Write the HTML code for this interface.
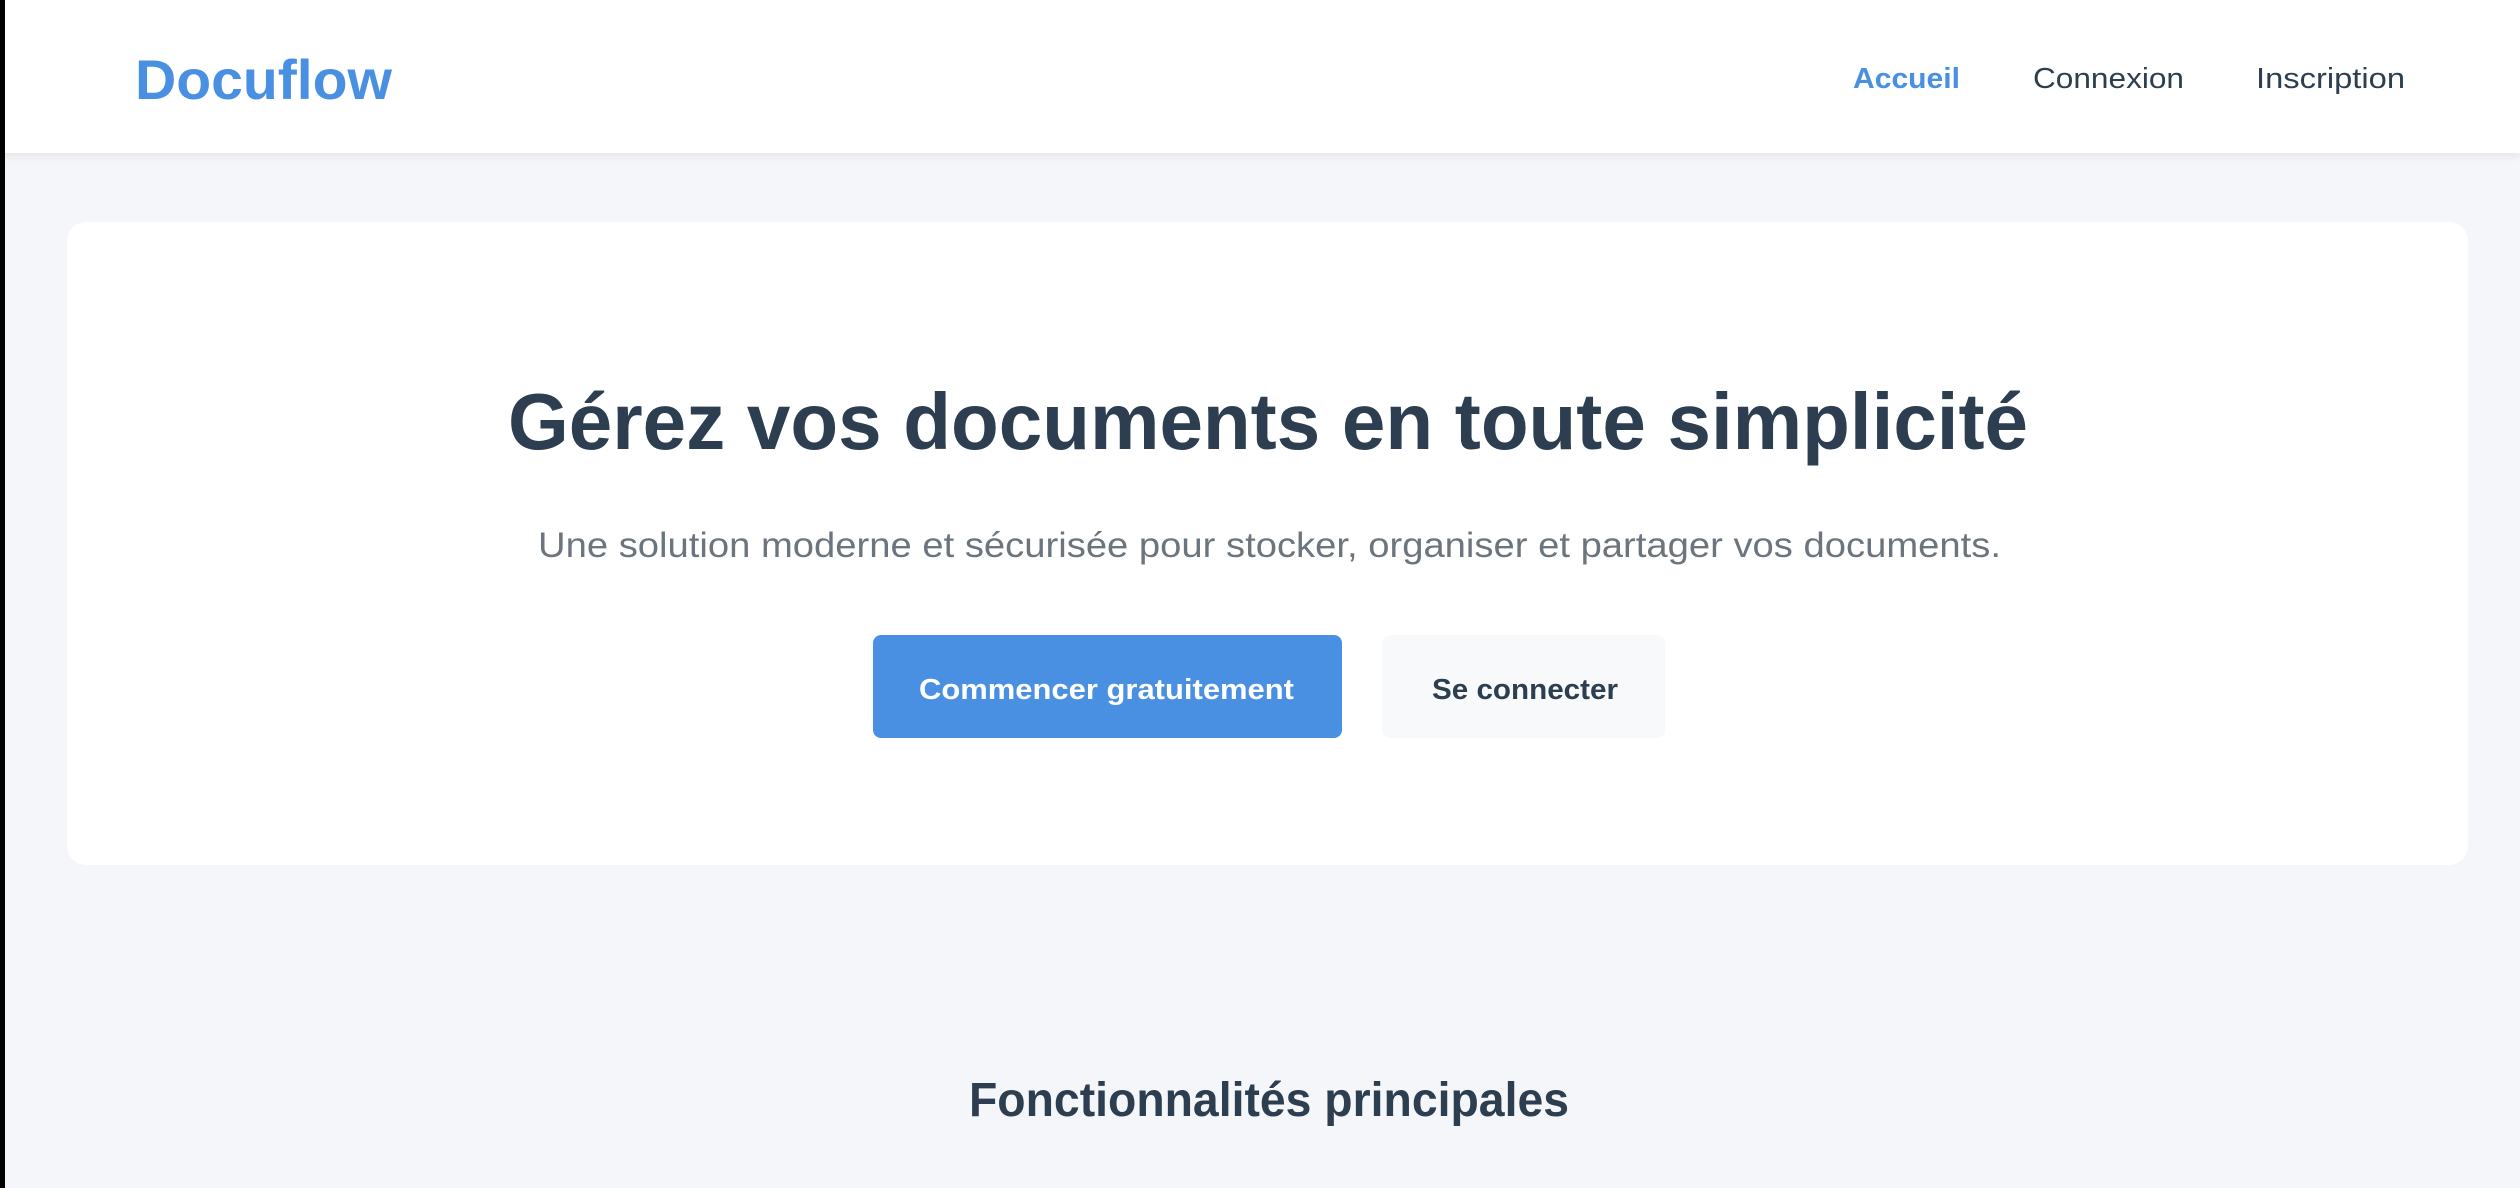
<!DOCTYPE html>
<html><head><meta charset="utf-8">
<style>
html,body{margin:0;padding:0;}
body{width:2520px;height:1188px;background:#f5f6f9;position:relative;overflow:hidden;font-family:"Liberation Sans",Arial,sans-serif;}
.bar{position:absolute;left:0;top:0;width:5px;height:1188px;background:#000;z-index:5}
header{position:absolute;left:0;top:0;width:2520px;height:153px;background:#fff;box-shadow:0 3px 8px rgba(0,0,0,0.08);}
.t{position:absolute;white-space:nowrap;transform-origin:0 50%;line-height:1;}
.card{position:absolute;left:67px;top:222px;width:2401px;height:643px;background:#fff;border-radius:19px;}
.btn{position:absolute;top:635px;height:103px;border-radius:8px;}
</style></head><body>
<div class="bar"></div>
<header></header>
<div class="t" style="left:135px;top:80px;font-size:56px;font-weight:bold;color:#4a90e2;margin-top:-28px" data-w="257">Docuflow</div>
<div class="t" style="left:1853px;top:80px;font-size:29px;font-weight:bold;color:#4a90e2;margin-top:-15px" data-w="107">Accueil</div>
<div class="t" style="left:2033px;top:80px;font-size:29px;color:#2c3e50;margin-top:-15px" data-w="151">Connexion</div>
<div class="t" style="left:2256px;top:80px;font-size:29px;color:#2c3e50;margin-top:-15px" data-w="149">Inscription</div>
<div class="card"></div>
<div class="t" style="left:508px;top:422px;font-size:80px;font-weight:bold;color:#2c3e50;margin-top:-40px" data-w="1520">Gérez vos documents en toute simplicité</div>
<div class="t" style="left:538px;top:546px;font-size:35px;color:#6c757d;margin-top:-18px" data-w="1463">Une solution moderne et sécurisée pour stocker, organiser et partager vos documents.</div>
<div class="btn" style="left:873px;width:469px;background:#4a90e2"></div>
<div class="btn" style="left:1382px;width:283px;background:#f8f9fa"></div>
<div class="t" style="left:919px;top:691px;font-size:29px;font-weight:bold;color:#fff;margin-top:-15px" data-w="375">Commencer gratuitement</div>
<div class="t" style="left:1432px;top:691px;font-size:29px;font-weight:bold;color:#2c3e50;margin-top:-15px" data-w="186">Se connecter</div>
<div class="t" style="left:969px;top:1101px;font-size:48px;font-weight:bold;color:#2c3e50;margin-top:-24px" data-w="600">Fonctionnalités principales</div>
<script>
document.querySelectorAll('.t').forEach(function(e){
var w=parseFloat(e.getAttribute('data-w'));var r=e.getBoundingClientRect().width;
if(r>0)e.style.transform='scaleX('+(w/r)+')';});
</script>
</body></html>
